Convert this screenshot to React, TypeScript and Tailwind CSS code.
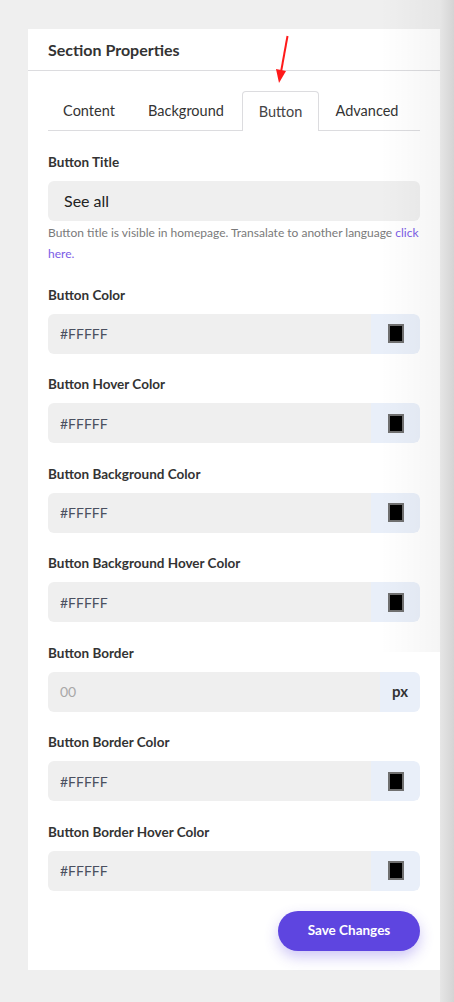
import React from "react";

const font = { fontFamily: "Lato, 'Open Sans', sans-serif" };

function Swatch() {
  return (
    <div className="w-[49px] h-10 bg-[#e9eff9] rounded-r-md flex items-center justify-center">
      <div className="w-[16px] h-[19px] bg-black border-2 border-[#707070]" />
    </div>
  );
}

function ColorField({ label }: { label: string }) {
  return (
    <div>
      <div className="text-[13.5px] leading-5 font-bold text-[#333] mb-[9px]">{label}</div>
      <div className="flex h-10 rounded-md overflow-hidden">
        <div className="flex-1 bg-[#efefef] flex items-center pl-3 text-[14px] text-[#4a5060]">#FFFFF</div>
        <Swatch />
      </div>
    </div>
  );
}

export default function App() {
  return (
    <div className="relative min-h-[1002px] w-[454px] bg-[#efefef] pt-[29px] overflow-hidden" style={font}>
      <div className="w-[412px] ml-[28px] bg-white">
        <div className="h-[42px] flex items-center px-5 border-b border-[#dcdcdf]">
          <div className="text-[16px] font-bold text-[#333] pt-[1px]">Section Properties</div>
        </div>
        <div className="px-5 pt-5 pb-[19px]">
          <div className="flex items-end border-b border-[#dcdcdf] h-10 text-[14.5px] text-[#333]">
            <div className="w-[82px] h-[39px] flex items-center justify-center">Content</div>
            <div className="w-[112px] h-[39px] flex items-center justify-center">Background</div>
            <div className="w-[77px] h-10 -mb-px bg-white border border-b-0 border-[#dcdcdf] rounded-t-[4px] flex items-center justify-center text-[#444]">Button</div>
            <div className="w-[96px] h-[39px] flex items-center justify-center">Advanced</div>
          </div>

          <div className="mt-[21px] flex flex-col gap-[20.5px]">
            <div>
              <div className="text-[13.5px] leading-5 font-bold text-[#333] mb-[9px]">Button Title</div>
              <div className="h-10 bg-[#efefef] rounded-md flex items-center pl-4 text-[16px] text-[#222]">See all</div>
              <div className="mt-[1px] text-[12px] leading-[21px] text-[#7a7a7a]">
                Button title is visible in homepage. Transalate to another language{" "}
                <span className="text-[#7b5ce6]">click here.</span>
              </div>
            </div>
            <ColorField label="Button Color" />
            <ColorField label="Button Hover Color" />
            <ColorField label="Button Background Color" />
            <ColorField label="Button Background Hover Color" />
            <div>
              <div className="text-[13.5px] leading-5 font-bold text-[#333] mb-[9px]">Button Border</div>
              <div className="flex h-10 rounded-md overflow-hidden">
                <div className="flex-1 bg-[#efefef] flex items-center pl-3 text-[14px] text-[#a8a8a8]">00</div>
                <div className="w-[40px] bg-[#e9eff9] flex items-center justify-center text-[15px] font-bold text-[#333]">px</div>
              </div>
            </div>
            <ColorField label="Button Border Color" />
            <ColorField label="Button Border Hover Color" />
          </div>

          <div className="flex justify-end mt-5">
            <button className="w-[142px] h-10 rounded-full bg-[#5e45e0] text-white text-[13.5px] font-bold shadow-[0_6px_14px_rgba(94,69,224,0.3)]">
              Save Changes
            </button>
          </div>
        </div>
      </div>

      <div className="absolute top-0 right-0 w-[14px] h-full bg-gradient-to-r from-[#e6e6e6] to-[#d4d4d4]" />
      <div className="absolute top-0 right-[14px] w-[60px] h-[652px] bg-gradient-to-r from-transparent to-[rgba(0,0,0,0.04)] pointer-events-none" />

      <svg className="absolute left-[274px] top-[34px]" width="20" height="52" viewBox="0 0 20 52">
        <line x1="13.5" y1="2" x2="7" y2="38" stroke="#ff1a1a" strokeWidth="2" />
        <polygon points="2,35 12,37 5,49" fill="#ff1a1a" />
      </svg>
    </div>
  );
}
